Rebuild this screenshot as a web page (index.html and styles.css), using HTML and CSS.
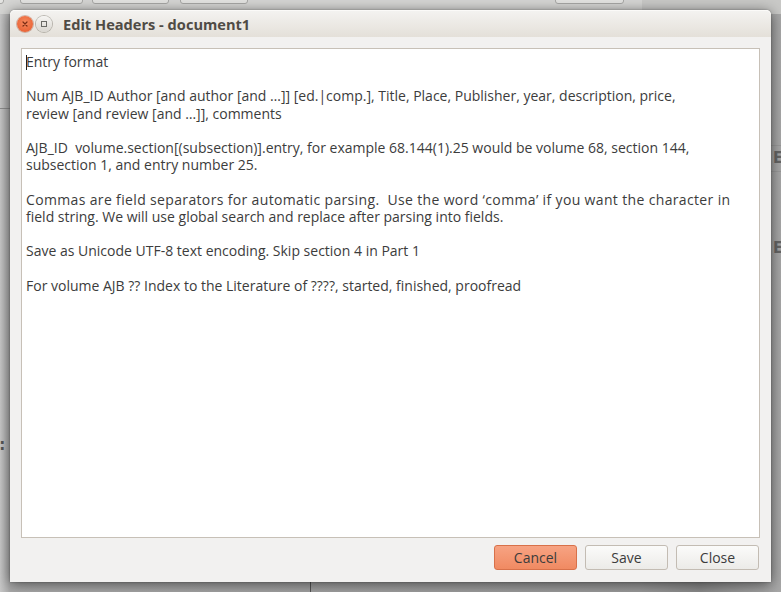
FILE: index.html
```html
<!DOCTYPE html>
<html>
<head>
<meta charset="utf-8">
<title>Edit Headers - document1</title>
<link rel="stylesheet" href="styles.css">
</head>
<body>
<div class="desktop">
  <div class="parent">
    <div class="parent-toolbar">
      <span class="pbtn pb1"></span>
      <span class="pbtn pb2"></span>
      <span class="pbtn pb3"></span>
      <span class="pbtn pb4"></span>
      <span class="pbtn pb5"></span>
    </div>
    <div class="parent-side"></div>
    <span class="pline pl1"></span>
    <span class="pline pl2"></span>
    <span class="pline pl3"></span>
    <span class="plabel pla">l:</span>
    <span class="plabel plb">E</span>
    <span class="plabel plc">E</span>
    <span class="pdiv"></span>
  </div>

  <div class="dialog">
    <div class="titlebar">
      <span class="wbtn wclose">
        <svg width="10" height="10" viewBox="0 0 10 10"><path d="M3 3L7 7M7 3L3 7" stroke="#7a2c14" stroke-width="1.2" stroke-linecap="round"/></svg>
      </span>
      <span class="wbtn wmax">
        <svg width="10" height="10" viewBox="0 0 10 10"><rect x="2.5" y="2.5" width="5" height="5" fill="none" stroke="#6a6a66" stroke-width="1"/></svg>
      </span>
      <span class="title">Edit Headers - document1</span>
    </div>
    <div class="content">
      <div class="editor"><span class="caret"></span>Entry format<br><br>Num AJB_ID Author [and author [and …]] [ed.|comp.], Title, Place, Publisher, year, description, price,<br>review [and review [and …]], comments<br><br>AJB_ID&nbsp;&nbsp;volume.section[(subsection)].entry, for example 68.144(1).25 would be volume 68, section 144,<br>subsection 1, and entry number 25.<br><br><span class="wide">Commas are field separators for automatic parsing.&nbsp; Use the word ‘comma’ if you want the character in</span><br>field string. We will use global search and replace after parsing into fields.<br><br>Save as Unicode UTF-8 text encoding. Skip section 4 in Part 1<br><br>For volume AJB ?? Index to the Literature of ????, started, finished, proofread</div>
      <div class="buttons">
        <button class="btn btn-cancel">Cancel</button>
        <button class="btn">Save</button>
        <button class="btn">Close</button>
      </div>
    </div>
  </div>
</div>
</body>
</html>
```

FILE: styles.css
```css
html, body {
  margin: 0;
  padding: 0;
}
body {
  width: 781px;
  height: 592px;
  overflow: hidden;
  font-family: "Open Sans", "Noto Sans", "DejaVu Sans", sans-serif;
}
.desktop {
  position: relative;
  width: 781px;
  height: 592px;
  background: #8e8e8e;
  overflow: hidden;
}
.parent {
  position: absolute;
  inset: 0;
  overflow: hidden;
  background: linear-gradient(to right, #c8c8c8 0px, #a9a9a9 10px, #9a9a9a 640px, #8a8a8a 700px, #a8a8a8 781px);
}
.parent-toolbar {
  position: absolute;
  left: 0;
  top: 0;
  width: 642px;
  height: 14px;
  background: #d6d6d4;
}
.parent-side {
  position: absolute;
  left: 642px;
  top: 0;
  width: 139px;
  height: 14px;
  background: #c9c9c7;
}
.pbtn {
  position: absolute;
  top: -10px;
  height: 12px;
  border: 1px solid #a8a8a6;
  border-radius: 3px;
  background: #e4e4e2;
}
.pb1 { left: -6px; width: 8px; }
.pb2 { left: 20px; width: 61px; }
.pb3 { left: 92px; width: 75px; }
.pb4 { left: 180px; width: 66px; }
.pb5 { left: 555px; width: 67px; }
.pline {
  position: absolute;
  height: 1px;
  background: #8c8c8c;
}
.pl1 { left: 0; top: 108px; width: 12px; }
.pl2 { left: 771px; top: 145px; width: 10px; background: #9a9a9a; }
.pl3 { left: 771px; top: 171px; width: 10px; background: #9a9a9a; }
.plabel {
  position: absolute;
  font-family: "DejaVu Sans", sans-serif;
  font-weight: bold;
  font-size: 15px;
  color: #555;
}
.pla { left: -6px; top: 436px; }
.plb { left: 773px; top: 149px; color: #666; }
.plc { left: 773px; top: 239px; color: #666; }
.pdiv {
  position: absolute;
  left: 310px;
  top: 582px;
  width: 1px;
  height: 10px;
  background: #555;
}

.dialog {
  position: absolute;
  left: 10px;
  top: 10px;
  width: 761px;
  height: 572px;
  display: flex;
  flex-direction: column;
  background: #f2f1f0;
  border-radius: 5px 5px 0 0;
  box-shadow: 0 2px 14px rgba(0, 0, 0, 0.55), 0 0 2px rgba(0, 0, 0, 0.35);
}
.titlebar {
  height: 27px;
  flex: none;
  display: flex;
  align-items: center;
  background: linear-gradient(#f4f3f1, #e4e0d9);
  border-radius: 5px 5px 0 0;
  box-shadow: inset 0 1px 0 #fbfaf8;
}
.wbtn {
  width: 16px;
  height: 16px;
  border-radius: 50%;
  display: flex;
  align-items: center;
  justify-content: center;
  flex: none;
}
.wclose {
  margin-left: 7px;
  background: radial-gradient(circle at 50% 40%, #f78a5e, #e4572a);
  box-shadow: 0 0 0 1px rgba(150, 70, 40, 0.35);
}
.wmax {
  margin-left: 3px;
  background: linear-gradient(#f6f5f3, #d9d6d0);
  box-shadow: 0 0 0 1px rgba(120, 115, 105, 0.45);
}
.title {
  margin-left: 11px;
  font-weight: bold;
  font-size: 14.6px;
  color: #4f4b45;
}
.content {
  flex: 1;
  display: flex;
  flex-direction: column;
  padding: 11px 11px 12px 11px;
}
.editor {
  flex: 1;
  background: #fff;
  border: 1px solid #c7c0b7;
  padding: 4px 4px;
  font-size: 14px;
  line-height: 17.2px;
  color: #3c3c3c;
  white-space: nowrap;
  overflow: hidden;
}
.wide {
  letter-spacing: 0.35px;
}
.caret {
  display: inline-block;
  width: 1px;
  height: 15px;
  background: #222;
  vertical-align: -3px;
  margin-right: -1px;
}
.buttons {
  display: flex;
  justify-content: flex-end;
  gap: 8px;
  margin-top: 7px;
  padding-right: 1px;
}
.btn {
  width: 83px;
  height: 25px;
  border: 1px solid #c3bcb3;
  border-radius: 3px;
  background: linear-gradient(#fbfbfa, #ecebe8);
  font-family: inherit;
  font-size: 14px;
  color: #3c3c3c;
  padding: 0;
}
.btn-cancel {
  border-color: #d8714a;
  background: linear-gradient(#f7a383, #f08a62);
}
```
